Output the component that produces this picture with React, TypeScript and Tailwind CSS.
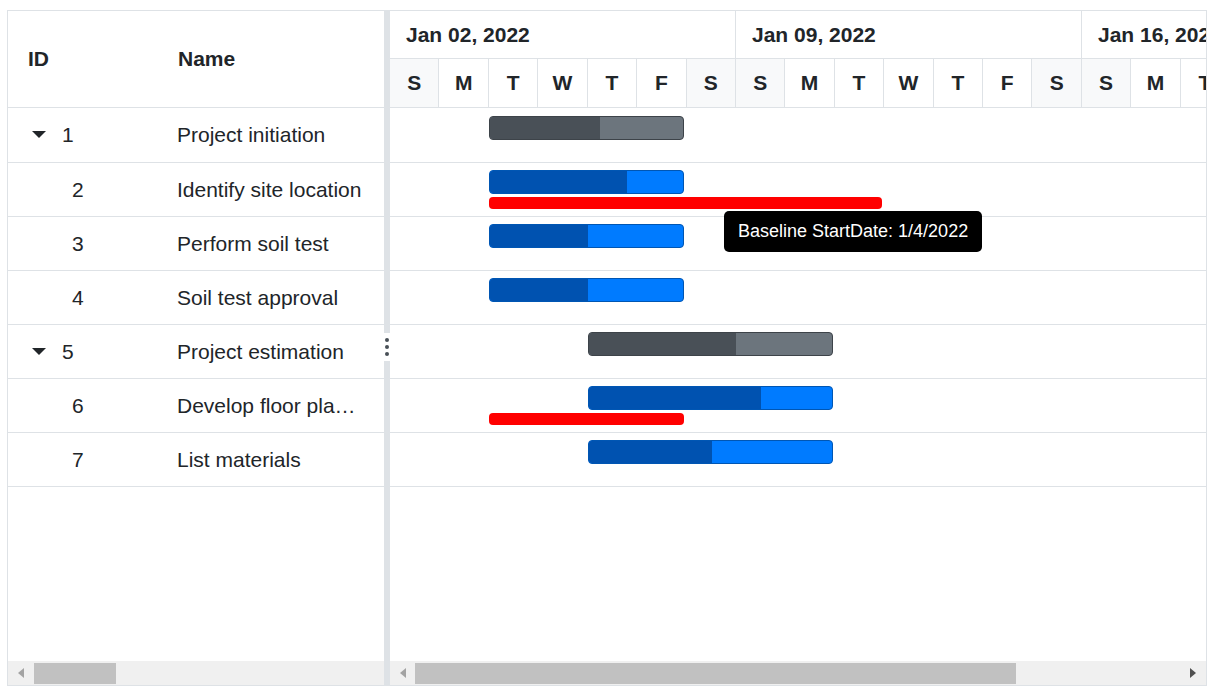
import React from 'react';

type Task = {
  id: number;
  name: string;
  parent?: boolean;
  start: number;
  end: number;
  progress: number;
  baseline?: [number, number];
};

// pixel offsets on the timeline (chart origin = first Sunday, 49.43px a day)
const tasks: Task[] = [
  { id: 1, name: 'Project initiation', parent: true, start: 99, end: 294, progress: 210 },
  { id: 2, name: 'Identify site location', start: 99, end: 294, progress: 237, baseline: [99, 492] },
  { id: 3, name: 'Perform soil test', start: 99, end: 294, progress: 198 },
  { id: 4, name: 'Soil test approval', start: 99, end: 294, progress: 198 },
  { id: 5, name: 'Project estimation', parent: true, start: 198, end: 443, progress: 346 },
  { id: 6, name: 'Develop floor plan for estimation', start: 198, end: 443, progress: 371, baseline: [99, 294] },
  { id: 7, name: 'List materials', start: 198, end: 443, progress: 322 },
];

const weeks = ['Jan 02, 2022', 'Jan 09, 2022', 'Jan 16, 2022'];
const days = ['S', 'M', 'T', 'W', 'T', 'F', 'S'];

function CaretDown() {
  return (
    <svg width="14" height="8" viewBox="0 0 14 8" className="shrink-0">
      <path d="M0 0 L14 0 L7 7 Z" fill="#212529" />
    </svg>
  );
}

function ScrollBar({ thumbLeft, thumbWidth, rightArrow }: { thumbLeft: number; thumbWidth: number; rightArrow?: boolean }) {
  return (
    <div className="relative h-[24px] shrink-0 bg-[#f0f0f0]">
      <svg width="6" height="10" viewBox="0 0 6 10" className="absolute left-[10px] top-[7px]">
        <path d="M6 0 L0 5 L6 10 Z" fill="#a3a3a3" />
      </svg>
      <div
        className="absolute top-[2px] h-[21px] bg-[#c1c1c1]"
        style={{ left: thumbLeft, width: thumbWidth }}
      />
      {rightArrow && (
        <svg width="6" height="10" viewBox="0 0 6 10" className="absolute right-[10px] top-[7px]">
          <path d="M0 0 L6 5 L0 10 Z" fill="#505050" />
        </svg>
      )}
    </div>
  );
}

function GridPane() {
  return (
    <div className="flex w-[376px] shrink-0 flex-col">
      <div className="flex h-[97px] shrink-0 items-center border-b border-[#dee2e6] text-[21px] font-bold">
        <div className="w-[150px] pl-[20px]">ID</div>
        <div className="flex-1 pl-[20px]">Name</div>
      </div>
      <div className="flex-1">
        {tasks.map((t, i) => (
          <div
            key={t.id}
            className={`flex items-center border-b border-[#dee2e6] text-[21px] ${i === 0 ? 'h-[55px]' : 'h-[54px]'}`}
          >
            <div className="flex w-[150px] items-center">
              {t.parent ? (
                <div className="flex items-center pl-[24px]">
                  <CaretDown />
                  <span className="ml-[16px]">{t.id}</span>
                </div>
              ) : (
                <span className="pl-[64px]">{t.id}</span>
              )}
            </div>
            <div className="min-w-0 flex-1 truncate pl-[19px] pr-[20px]">{t.name}</div>
          </div>
        ))}
      </div>
      <ScrollBar thumbLeft={26} thumbWidth={82} />
    </div>
  );
}

function Splitter() {
  return (
    <div className="relative w-[6px] shrink-0 bg-[#dee2e6]">
      <div className="absolute left-0 top-[322px] flex h-[28px] w-[6px] flex-col items-center justify-center gap-[3px] bg-white">
        <span className="h-[4px] w-[4px] rounded-full bg-[#495057]" />
        <span className="h-[4px] w-[4px] rounded-full bg-[#495057]" />
        <span className="h-[4px] w-[4px] rounded-full bg-[#495057]" />
      </div>
    </div>
  );
}

function Bar({ t, top }: { t: Task; top: number }) {
  const border = t.parent ? 'border-[#3d4349]' : 'border-[#0056b3]';
  const done = t.parent ? 'bg-[#495057]' : 'bg-[#0052b0]';
  const rest = t.parent ? 'bg-[#6c757d]' : 'bg-[#007bff]';
  return (
    <>
      <div
        className={`absolute flex h-[24px] overflow-hidden rounded-[4px] border ${border} ${rest}`}
        style={{ left: t.start, top, width: t.end - t.start }}
      >
        <div className={`h-full ${done}`} style={{ width: t.progress - t.start - 1 }} />
      </div>
      {t.baseline && (
        <div
          className="absolute h-[12px] rounded-[4px] bg-[#ff0000]"
          style={{ left: t.baseline[0], top: top + 27, width: t.baseline[1] - t.baseline[0] }}
        />
      )}
    </>
  );
}

function ChartPane() {
  return (
    <div className="flex min-w-0 flex-1 flex-col">
      <div className="h-[97px] shrink-0 overflow-hidden border-b border-[#dee2e6]">
        <div className="flex h-[48px] border-b border-[#dee2e6]">
          {weeks.map((w) => (
            <div
              key={w}
              className="flex w-[346px] shrink-0 items-center whitespace-nowrap border-r border-[#dee2e6] pl-[16px] text-[21px] font-bold"
            >
              {w}
            </div>
          ))}
        </div>
        <div className="flex h-[48px]">
          {weeks.map((w) =>
            days.map((d, i) => (
              <div
                key={w + i}
                className={`flex w-[49.43px] shrink-0 items-center justify-center border-r border-[#dee2e6] text-[21px] font-bold ${
                  i === 0 || i === 6 ? 'bg-[#f8f9fa]' : 'bg-white'
                }`}
              >
                {d}
              </div>
            ))
          )}
        </div>
      </div>
      <div className="relative flex-1 overflow-hidden">
        {tasks.map((t, i) => (
          <div
            key={t.id}
            className={`border-b border-[#dee2e6] ${i === 0 ? 'h-[55px]' : 'h-[54px]'}`}
          />
        ))}
        {tasks.map((t, i) => (
          <Bar key={t.id} t={t} top={8 + 54 * i} />
        ))}
        <div className="absolute left-[334px] top-[103px] flex h-[41px] items-center whitespace-nowrap rounded-[5px] bg-black px-[14px] text-[18px] text-white">
          Baseline StartDate: 1/4/2022
        </div>
      </div>
      <ScrollBar thumbLeft={25} thumbWidth={601} rightArrow />
    </div>
  );
}

export default function App() {
  return (
    <div className="h-[691px] w-[1213px] bg-white pl-[7px] pt-[10px] font-['Liberation_Sans',Arial,sans-serif] text-[#212529]">
      <div className="flex h-[676px] w-[1200px] border border-[#dee2e6]">
        <GridPane />
        <Splitter />
        <ChartPane />
      </div>
    </div>
  );
}
